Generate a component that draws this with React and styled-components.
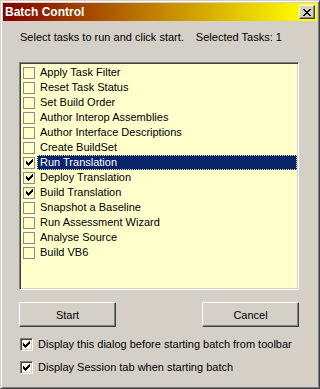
import React from "react";
import styled, { createGlobalStyle } from "styled-components";

const Global = createGlobalStyle`
  html, body { margin: 0; padding: 0; background: #d4d0c8; }
  body { font-family: "Liberation Sans", Arial, sans-serif; font-size: 11px; }
`;

const Window = styled.div`
  width: 320px;
  height: 389px;
  box-sizing: border-box;
  background: #d4d0c8;
  border: 1px solid;
  border-color: #d4d0c8 #404040 #404040 #d4d0c8;
  box-shadow: inset 1px 1px #ffffff, inset -1px -1px #808080;
  padding: 2px;
  display: flex;
  flex-direction: column;
`;

const TitleBar = styled.div`
  height: 18px;
  display: flex;
  align-items: center;
  justify-content: space-between;
  padding: 0 2px 0 2px;
  background: linear-gradient(to right, #800000, #ffff00 96%);
`;

const Title = styled.span`
  color: #fff;
  font-weight: bold;
  font-size: 12px;
`;

const CloseButton = styled.div`
  width: 16px;
  height: 14px;
  box-sizing: border-box;
  background: #d4d0c8;
  border: 1px solid;
  border-color: #ffffff #404040 #404040 #ffffff;
  box-shadow: inset -1px -1px #808080;
  display: flex;
  align-items: center;
  justify-content: center;
`;

const Body = styled.div`
  display: flex;
  flex-direction: column;
  padding: 10px 18px 0 16px;
`;

const Instruction = styled.div`
  display: flex;
  gap: 12px;
  height: 13px;
  line-height: 13px;
  padding-left: 1px;
  color: #000;
`;

const ListBox = styled.div`
  margin-top: 18px;
  height: 228px;
  box-sizing: border-box;
  background: #ffffcc;
  border: 1px solid;
  border-color: #808080 #ffffff #ffffff #808080;
  box-shadow: inset 1px 1px #404040, inset -1px -1px #d4d0c8;
  padding: 2px 2px 0 3px;
  display: flex;
  flex-direction: column;
`;

const Row = styled.div`
  height: 15px;
  display: flex;
  align-items: center;
`;

const FlatBox = styled.div`
  width: 12px;
  height: 12px;
  box-sizing: border-box;
  border: 1px solid #8c8c8c;
  display: flex;
  align-items: center;
  justify-content: center;
  flex: none;
`;

const Label = styled.div`
  flex: 1;
  height: 15px;
  box-sizing: border-box;
  margin-left: 2px;
  margin-right: -1px;
  padding-left: 2px;
  line-height: 13px;
  color: ${(p) => (p.$selected ? "#ffffff" : "#000000")};
  background: ${(p) => (p.$selected ? "#0a246a" : "transparent")};
  border: 1px ${(p) => (p.$selected ? "dotted #e8e8b0" : "solid transparent")};
  white-space: nowrap;
`;

const ButtonRow = styled.div`
  margin-top: 12px;
  display: flex;
  justify-content: space-between;
`;

const Button = styled.div`
  width: 97px;
  height: 25px;
  box-sizing: border-box;
  background: #d4d0c8;
  border: 1px solid;
  border-color: #ffffff #404040 #404040 #ffffff;
  box-shadow: inset -1px -1px #808080;
  display: flex;
  align-items: center;
  justify-content: center;
  color: #000;
`;

const Options = styled.div`
  margin-top: 9px;
  display: flex;
  flex-direction: column;
  gap: 7px;
`;

const OptionRow = styled.div`
  height: 16px;
  display: flex;
  align-items: center;
  padding-left: 1px;
  gap: 5px;
`;

const SunkenBox = styled.div`
  width: 13px;
  height: 13px;
  box-sizing: border-box;
  background: #ffffe8;
  border: 1px solid;
  border-color: #808080 #ffffff #ffffff #808080;
  box-shadow: inset 1px 1px #404040, inset -1px -1px #d4d0c8;
  display: flex;
  align-items: center;
  justify-content: center;
  flex: none;
`;

const Check = () => (
  <svg width="7" height="7" viewBox="0 0 7 7" shapeRendering="crispEdges">
    <path
      fill="#000"
      d="M0 2h1v3h-1z M1 3h1v3h-1z M2 4h1v3h-1z M3 3h1v3h-1z M4 2h1v3h-1z M5 1h1v3h-1z M6 0h1v3h-1z"
    />
  </svg>
);

const CloseGlyph = () => (
  <svg width="8" height="7" viewBox="0 0 8 7" shapeRendering="crispEdges">
    <path
      fill="#000"
      d="M0 0h2v1h-2z M6 0h2v1h-2z M1 1h2v1h-2z M5 1h2v1h-2z M2 2h4v1h-4z M3 3h2v1h-2z M2 4h4v1h-4z M1 5h2v1h-2z M5 5h2v1h-2z M0 6h2v1h-2z M6 6h2v1h-2z"
    />
  </svg>
);

const tasks = [
  { name: "Apply Task Filter" },
  { name: "Reset Task Status" },
  { name: "Set Build Order" },
  { name: "Author Interop Assemblies" },
  { name: "Author Interface Descriptions" },
  { name: "Create BuildSet" },
  { name: "Run Translation", checked: true, selected: true },
  { name: "Deploy Translation", checked: true },
  { name: "Build Translation", checked: true },
  { name: "Snapshot a Baseline" },
  { name: "Run Assessment Wizard" },
  { name: "Analyse Source" },
  { name: "Build VB6" },
];

export default function App() {
  return (
    <>
      <Global />
      <Window>
        <TitleBar>
          <Title>Batch Control</Title>
          <CloseButton>
            <CloseGlyph />
          </CloseButton>
        </TitleBar>
        <Body>
          <Instruction>
            <span>Select tasks to run and click start.</span>
            <span>Selected Tasks: 1</span>
          </Instruction>
          <ListBox>
            {tasks.map((t) => (
              <Row key={t.name}>
                <FlatBox>{t.checked && <Check />}</FlatBox>
                <Label $selected={t.selected}>{t.name}</Label>
              </Row>
            ))}
          </ListBox>
          <ButtonRow>
            <Button>Start</Button>
            <Button>Cancel</Button>
          </ButtonRow>
          <Options>
            <OptionRow>
              <SunkenBox>
                <Check />
              </SunkenBox>
              <span>Display this dialog before starting batch from toolbar</span>
            </OptionRow>
            <OptionRow>
              <SunkenBox>
                <Check />
              </SunkenBox>
              <span>Display Session tab when starting batch</span>
            </OptionRow>
          </Options>
        </Body>
      </Window>
    </>
  );
}
